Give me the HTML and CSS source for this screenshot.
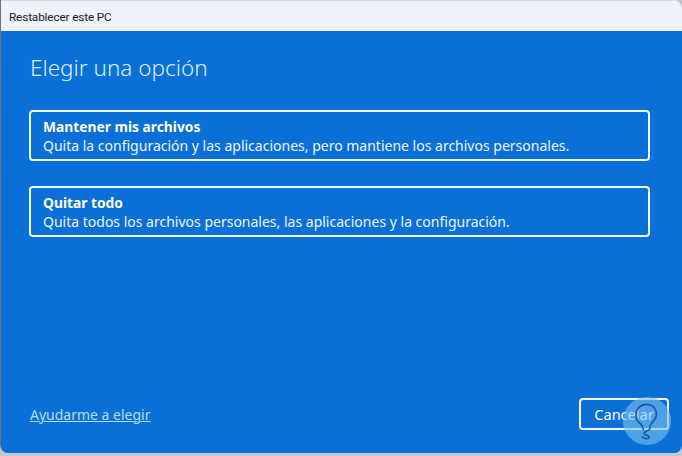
FILE: index.html
```html
<!DOCTYPE html>
<html lang="es">
  <head>
    <meta charset="UTF-8" />
    <meta name="viewport" content="width=device-width, initial-scale=1.0" />
    <title>Restablecer este PC</title>
    <link rel="stylesheet" href="styles.css">
  </head>
  <body>
    <div class="window">
      <div class="title-bar">Restablecer este PC</div>
      <div class="content">
        <h1 class="heading">Elegir una opción</h1>
        <div class="options">
          <button class="option">
            <span class="option-title">Mantener mis archivos</span>
            <span class="option-desc">Quita la configuración y las aplicaciones, pero mantiene los archivos personales.</span>
          </button>
          <button class="option">
            <span class="option-title">Quitar todo</span>
            <span class="option-desc">Quita todos los archivos personales, las aplicaciones y la configuración.</span>
          </button>
        </div>
        <div class="footer">
          <a class="help-link" href="#">Ayudarme a elegir</a>
          <button class="cancel-btn">Cancelar</button>
        </div>
      </div>
    </div>
    <svg class="watermark" width="50" height="50" viewBox="0 0 54 54">
      <circle cx="27" cy="27" r="26" fill="#7cc2f2" fill-opacity="0.6" />
      <path d="M20 30 C12 24 14 10 26 9 C37 9 40 20 34 27 C31 30 30 32 30 35 C30 38 23 38 24 41 C25 43 30 42 29 45 C28 47 23 46 22 44"
        fill="none" stroke="#1c5a9e" stroke-width="1.8" stroke-linecap="round" />
      <path d="M20 30 C22 32 23 34 23 36" fill="none" stroke="#1c5a9e" stroke-width="1.8" stroke-linecap="round" />
    </svg>
  </body>
</html>
```

FILE: styles.css
```css
* {
  margin: 0;
  padding: 0;
  box-sizing: border-box;
}
body {
  width: 682px;
  height: 456px;
  background-color: #c3c7cf;
  font-family: "Noto Sans", "Open Sans", sans-serif;
  overflow: hidden;
  position: relative;
}
.window {
  width: 681px;
  height: 453px;
  margin-left: 1px;
  border-radius: 0 8px 8px 8px;
  overflow: hidden;
  display: flex;
  flex-direction: column;
  background-color: #0a6fd7;
  box-shadow: -1px 0 0 #6d7480;
}
.title-bar {
  height: 31px;
  background-color: #eef2f9;
  color: #1a1a1a;
  font-family: Roboto, "Noto Sans", sans-serif;
  font-size: 11.8px;
  letter-spacing: -0.15px;
  padding: 9px 0 0 8px;
  border-top: 1px solid #d5d9e0;
}
.content {
  flex: 1;
  display: flex;
  flex-direction: column;
  padding: 22px 32px 23px 28px;
}
.heading {
  font-size: 22.5px;
  font-weight: 300;
  color: #dcefff;
  line-height: 30px;
  padding-left: 1px;
}
.options {
  display: flex;
  flex-direction: column;
  gap: 25px;
  margin-top: 27px;
}
.option {
  height: 51px;
  border: 2px solid #f2f8ff;
  border-radius: 4px;
  background: none;
  text-align: left;
  padding: 6px 12px 0;
  display: flex;
  flex-direction: column;
  font-family: inherit;
  color: #ffffff;
}
.option-title {
  font-size: 13.8px;
  font-weight: 700;
  line-height: 18px;
}
.option-desc {
  font-size: 14px;
  line-height: 20px;
  color: #eef6ff;
}
.footer {
  margin-top: auto;
  display: flex;
  justify-content: space-between;
  align-items: center;
}
.help-link {
  font-size: 14px;
  color: #b5defe;
  text-decoration: underline;
  margin-left: 1px;
}
.cancel-btn {
  width: 90px;
  height: 32px;
  border: 2px solid #f2f8ff;
  border-radius: 4px;
  background: none;
  color: #ffffff;
  font-family: inherit;
  font-size: 14.5px;
  margin-right: -19px;
}
.watermark {
  position: absolute;
  left: 622px;
  top: 396px;
}
```
